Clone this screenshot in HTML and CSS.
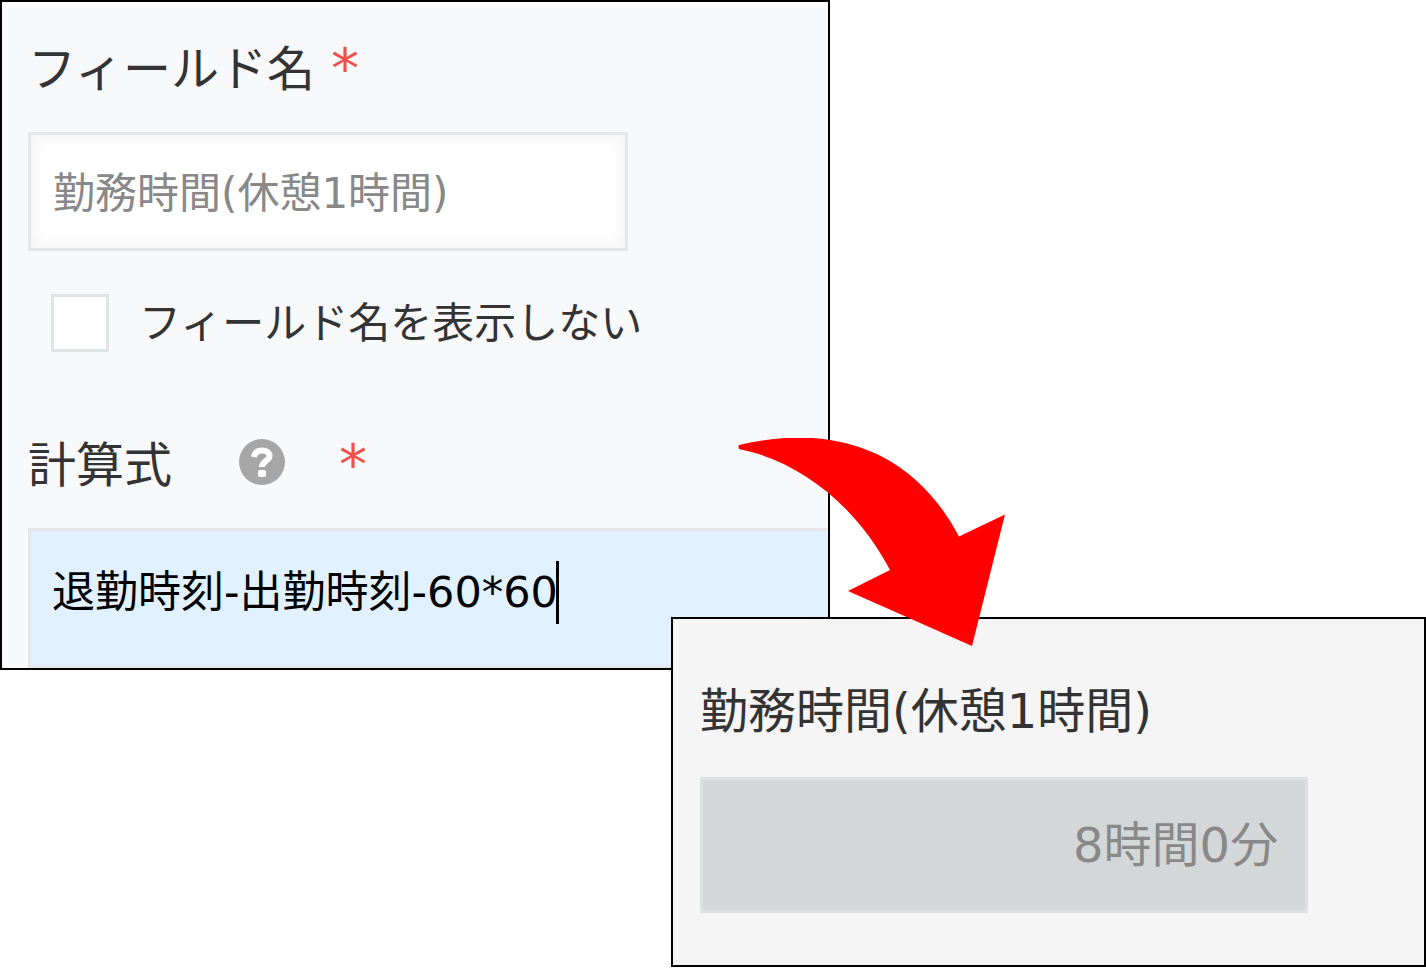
FILE: index.html
```html
<!DOCTYPE html>
<html lang="ja">
<head>
<meta charset="utf-8">
<title>計算フィールドの設定</title>
<link rel="stylesheet" href="styles.css">
</head>
<body>
<main class="stage">
  <form class="panel settings">
    <div class="label-row">
      <label for="field-name">フィールド名</label>
      <span class="required">*</span>
    </div>
    <input class="name-input" id="field-name" type="text" value="勤務時間(休憩1時間)">
    <div class="check-row">
      <input class="check" id="hide-name" type="checkbox">
      <label for="hide-name">フィールド名を表示しない</label>
    </div>
    <div class="label-row formula-label">
      <label for="formula">計算式</label>
      <button class="help" type="button" aria-label="ヘルプ">
        <svg viewBox="0 0 46 46" aria-hidden="true">
          <circle cx="23" cy="23" r="23" fill="#a6a6a6"/>
          <path d="M15 18C16 13 19 11.500 23 11.500C28 11.500 30.500 14 30.500 17C30.500 22 23 21.500 23 28" fill="none" stroke="#fff" stroke-width="6"/>
          <rect x="19" y="31" width="8" height="7" rx="2" fill="#fff"/>
        </svg>
      </button>
      <span class="required">*</span>
    </div>
    <div class="formula-box">
      <textarea class="formula" id="formula" rows="1">退勤時刻-出勤時刻-60*60</textarea>
      <span class="caret"></span>
    </div>
  </form>
  <section class="panel result">
    <label class="result-label" for="result">勤務時間(休憩1時間)</label>
    <input class="result-value" id="result" type="text" value="8時間0分" readonly>
  </section>
  <svg class="arrow" viewBox="0 0 268 210" aria-hidden="true">
    <path d="M1 7C94 -15 175 11 221 98.500L267 76.500L234 208L110 153L152 132C117 66 61 23 1 11Q0 9 1 7Z" fill="#f00"/>
  </svg>
</main>
</body>
</html>
```
FILE: styles.css
```css
* {
  box-sizing: border-box;
}

body {
  margin: 0;
  background: #fff;
  color: #333;
  font-family: "DejaVu Sans", "Noto Sans CJK JP", sans-serif;
  font-size: 48px;
  line-height: 60px;
}

input,
textarea,
button {
  margin: 0;
  font: inherit;
}

.stage {
  position: relative;
}

.panel {
  border: 2px solid #000;
}

.settings {
  width: 58.2%;
  padding: 37px 0 0 26px;
  background: #f8f9fb;
  box-shadow: inset 0 4px #fff;
}

.label-row {
  display: flex;
  align-items: flex-start;
  gap: 16px;
}

.required {
  color: #f0504a;
  font-size: 56px;
  line-height: 60px;
}

.name-input {
  display: block;
  width: 75%;
  height: 119px;
  margin-top: 33px;
  padding: 0 22px 4px;
  border: 3px solid #e3e7e8;
  background: #fff;
  box-shadow: inset 0 0 12px 4px #f5f5f5;
  color: #888;
  font-size: 42px;
}

.check-row {
  display: flex;
  align-items: center;
  gap: 30px;
  margin: 41px 0 81px 23px;
  font-size: 42px;
}

.check-row label {
  padding-top: 2px;
}

.check {
  appearance: none;
  width: 58px;
  height: 58px;
  border: 3px solid #e1e4e4;
  background: #fff;
}

.formula-label {
  gap: 54px;
}

.help {
  width: 46px;
  height: 46px;
  margin: 4px 0 0 13px;
  padding: 0;
  border: 0;
  background: none;
}

.help svg {
  display: block;
}

.formula-box {
  position: relative;
  margin-top: 33px;
}

.formula {
  display: block;
  width: 100%;
  height: 140px;
  padding: 31px 21px;
  border: solid #e3e7e8;
  border-width: 3px 0 2px 3px;
  background: #e1f1ff;
  color: #000;
  font-size: 43px;
  resize: none;
  overflow: hidden;
}

.caret {
  position: absolute;
  top: 33px;
  left: 528px;
  width: 3px;
  height: 63px;
  background: #000;
}

.result {
  position: relative;
  width: 52.95%;
  margin: -53px 0 0 auto;
  padding: 62px 0 52px 27px;
  background: #f5f5f5;
}

.result-label {
  display: block;
}

.result-value {
  display: block;
  width: 84%;
  height: 136px;
  margin-top: 36px;
  padding: 0 27px 8px;
  border: 3px solid #dde1e2;
  background: #d3d7d8;
  color: #888;
  text-align: right;
}

.arrow {
  position: absolute;
  top: 438px;
  left: 51.75%;
  width: 268px;
  height: 210px;
}
```
